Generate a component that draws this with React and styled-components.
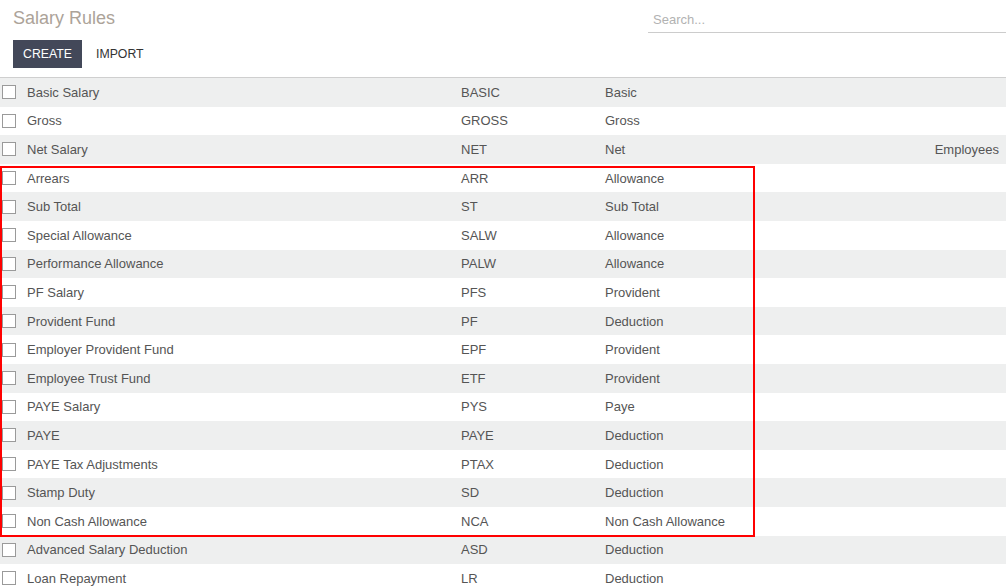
import React from "react";
import styled, { createGlobalStyle } from "styled-components";

const Global = createGlobalStyle`
  html, body { margin: 0; padding: 0; background: #fff; }
  body { font-family: "Liberation Sans", Arial, sans-serif; }
  * { box-sizing: border-box; }
`;

const Page = styled.div`
  width: 1006px;
  height: 588px;
  overflow: hidden;
  background: #fff;
  position: relative;
`;

const Header = styled.div`
  height: 78px;
  border-bottom: 1px solid #cfcfcf;
  display: flex;
  flex-direction: column;
  padding-left: 13px;
`;

const TopRow = styled.div`
  display: flex;
  justify-content: space-between;
  align-items: flex-start;
  height: 40px;
`;

const Title = styled.h1`
  margin: 6px 0 0 0;
  font-size: 18px;
  font-weight: normal;
  color: #aca399;
  line-height: 24px;
`;

const Search = styled.input`
  width: 358px;
  margin-top: 7px;
  height: 26px;
  border: none;
  border-bottom: 1px solid #cccccc;
  outline: none;
  padding: 0 0 0 5px;
  font-family: "Liberation Sans", Arial, sans-serif;
  font-size: 13px;
  color: #444;
  &::placeholder { color: #b2b2b2; }
`;

const Buttons = styled.div`
  display: flex;
  align-items: center;
`;

const Button = styled.button`
  height: 28px;
  padding: 0 ${(p) => (p.$primary ? "10px" : "14px")};
  width: ${(p) => (p.$primary ? "69px" : "auto")};
  border: none;
  border-radius: 0;
  background: ${(p) => (p.$primary ? "#434859" : "transparent")};
  color: ${(p) => (p.$primary ? "#ffffff" : "#333333")};
  font-family: "Liberation Sans", Arial, sans-serif;
  font-size: 12.3px;
  cursor: pointer;
`;

const List = styled.div`
  position: relative;
`;

const Row = styled.div`
  height: 28.6px;
  display: grid;
  grid-template-columns: 27px 434px 144px 1fr auto;
  align-items: center;
  background: ${(p) => (p.$odd ? "#eeefef" : "#ffffff")};
  color: #555555;
  font-size: 13px;
`;

const Check = styled.span`
  width: 14px;
  height: 14px;
  margin-left: 2px;
  border: 1px solid #9a9a9a;
  background: #fff;
  display: block;
`;

const Cell = styled.span`
  white-space: nowrap;
  text-align: ${(p) => (p.$right ? "right" : "left")};
  padding-right: ${(p) => (p.$right ? "7px" : "0")};
`;

const Highlight = styled.div`
  position: absolute;
  left: 0;
  top: 88px;
  width: 755px;
  height: 371px;
  border: 2px solid #ff0000;
  pointer-events: none;
`;

const rows = [
  ["Basic Salary", "BASIC", "Basic", ""],
  ["Gross", "GROSS", "Gross", ""],
  ["Net Salary", "NET", "Net", "Employees"],
  ["Arrears", "ARR", "Allowance", ""],
  ["Sub Total", "ST", "Sub Total", ""],
  ["Special Allowance", "SALW", "Allowance", ""],
  ["Performance Allowance", "PALW", "Allowance", ""],
  ["PF Salary", "PFS", "Provident", ""],
  ["Provident Fund", "PF", "Deduction", ""],
  ["Employer Provident Fund", "EPF", "Provident", ""],
  ["Employee Trust Fund", "ETF", "Provident", ""],
  ["PAYE Salary", "PYS", "Paye", ""],
  ["PAYE", "PAYE", "Deduction", ""],
  ["PAYE Tax Adjustments", "PTAX", "Deduction", ""],
  ["Stamp Duty", "SD", "Deduction", ""],
  ["Non Cash Allowance", "NCA", "Non Cash Allowance", ""],
  ["Advanced Salary Deduction", "ASD", "Deduction", ""],
  ["Loan Repayment", "LR", "Deduction", ""],
];

export default function App() {
  return (
    <Page>
      <Global />
      <Header>
        <TopRow>
          <Title>Salary Rules</Title>
          <Search placeholder="Search..." />
        </TopRow>
        <Buttons>
          <Button $primary>CREATE</Button>
          <Button>IMPORT</Button>
        </Buttons>
      </Header>
      <List>
        {rows.map((r, i) => (
          <Row key={r[0]} $odd={i % 2 === 0}>
            <Check />
            <Cell>{r[0]}</Cell>
            <Cell>{r[1]}</Cell>
            <Cell>{r[2]}</Cell>
            <Cell $right>{r[3]}</Cell>
          </Row>
        ))}
        <Highlight />
      </List>
    </Page>
  );
}
